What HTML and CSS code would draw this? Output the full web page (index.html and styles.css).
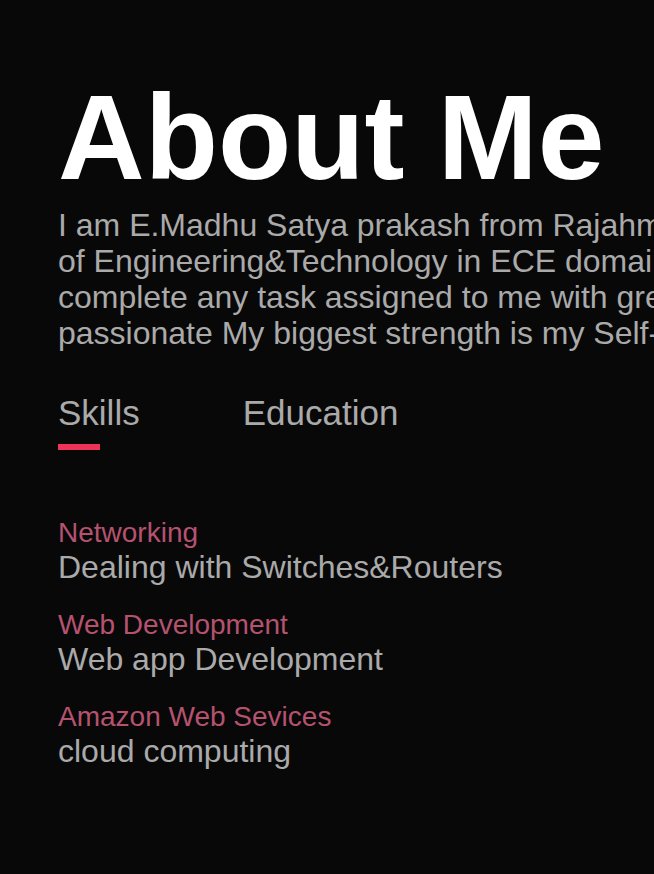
FILE: index.html
```html
<!DOCTYPE html>
<html lang="en">
<head>
<meta charset="utf-8">
<title>About Me</title>
<link rel="stylesheet" href="styles.css">
</head>
<body>
<section class="about">
  <h1 class="about-title">About Me</h1>
  <p class="about-text">I am E.Madhu Satya prakash from Rajahmundry. I am pursuing B.Tech in Godavari Institute<br>of Engineering&amp;Technology in ECE domain. I am a hardworking person and I can<br>complete any task assigned to me with great dedication. I am very curious and<br>passionate My biggest strength is my Self-confidence.</p>
  <div class="tabs">
    <span class="tab tab-active">Skills</span>
    <span class="tab">Education</span>
  </div>
  <ul class="skills">
    <li class="skill">
      <span class="skill-name">Networking</span>
      <span class="skill-desc">Dealing with Switches&amp;Routers</span>
    </li>
    <li class="skill">
      <span class="skill-name">Web Development</span>
      <span class="skill-desc">Web app Development</span>
    </li>
    <li class="skill">
      <span class="skill-name">Amazon Web Sevices</span>
      <span class="skill-desc">cloud computing</span>
    </li>
  </ul>
</section>
</body>
</html>
```
FILE: styles.css
```css
html, body {
  margin: 0;
  padding: 0;
  background: #080808;
  overflow: hidden;
}
body {
  font-family: "Liberation Sans", Arial, Helvetica, sans-serif;
  color: #aaaaaa;
}
.about {
  padding: 77px 0 0 58px;
}
.about-title {
  margin: 0;
  font-size: 120px;
  line-height: 120px;
  font-weight: 700;
  color: #ffffff;
  white-space: nowrap;
}
.about-text {
  margin: 10px 0 0;
  font-size: 32px;
  line-height: 36px;
  white-space: nowrap;
}
.tabs {
  display: flex;
  margin-top: 41px;
}
.tab {
  font-size: 35px;
  line-height: 42px;
  margin-right: 103px;
  padding-bottom: 10px;
  position: relative;
}
.tab-active::after {
  content: "";
  position: absolute;
  left: 0;
  bottom: -6px;
  width: 42px;
  height: 6px;
  background: #eb3458;
}
.skills {
  list-style: none;
  margin: 71px 0 0;
  padding: 0;
}
.skill {
  display: flex;
  flex-direction: column;
  margin-bottom: 22px;
}
.skill-name {
  font-size: 28px;
  line-height: 35px;
  color: #b5526f;
}
.skill-desc {
  font-size: 32px;
  line-height: 35px;
  color: #aaaaaa;
}
```
